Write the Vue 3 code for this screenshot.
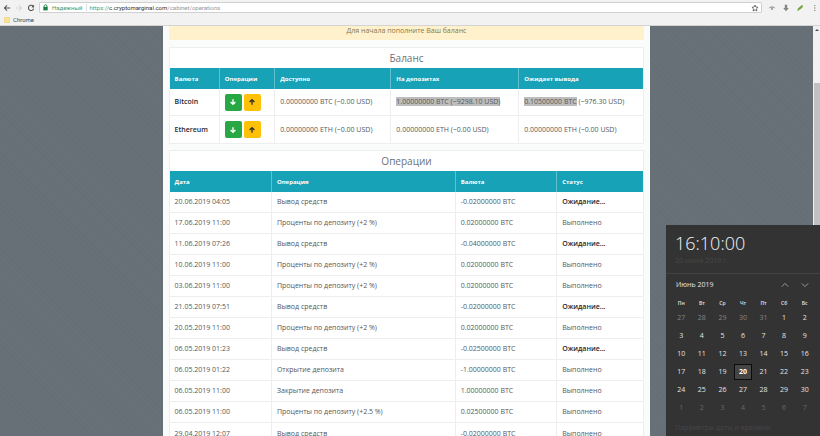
<script setup>
import { ref } from 'vue'

const address = ref('https://c.cryptomarginal.com/cabinet/operations')

const balances = [
  { name: 'Bitcoin', free: '0.00000000 BTC (~0.00 USD)', deposit: '1.00000000 BTC (~9298.10 USD)', pending: '0.10500000 BTC', pendingUsd: '(~976.30 USD)', selected: true },
  { name: 'Ethereum', free: '0.00000000 ETH (~0.00 USD)', deposit: '0.00000000 ETH (~0.00 USD)', pending: '0.00000000 ETH', pendingUsd: '(~0.00 USD)', selected: false },
]

const operations = [
  ['20.06.2019 04:05', 'Вывод средств', '-0.02000000 BTC', false],
  ['17.06.2019 11:00', 'Проценты по депозиту (+2 %)', '0.02000000 BTC', true],
  ['11.06.2019 07:26', 'Вывод средств', '-0.04000000 BTC', false],
  ['10.06.2019 11:00', 'Проценты по депозиту (+2 %)', '0.02000000 BTC', true],
  ['03.06.2019 11:00', 'Проценты по депозиту (+2 %)', '0.02000000 BTC', true],
  ['21.05.2019 07:51', 'Вывод средств', '-0.02000000 BTC', false],
  ['20.05.2019 11:00', 'Проценты по депозиту (+2 %)', '0.02000000 BTC', true],
  ['06.05.2019 01:23', 'Вывод средств', '-0.02500000 BTC', false],
  ['06.05.2019 01:22', 'Открытие депозита', '-1.00000000 BTC', true],
  ['06.05.2019 11:00', 'Закрытие депозита', '1.00000000 BTC', true],
  ['06.05.2019 11:00', 'Проценты по депозиту (+2.5 %)', '0.02500000 BTC', true],
  ['29.04.2019 12:07', 'Вывод средств', '-0.02000000 BTC', true],
]

const weekdays = ['Пн', 'Вт', 'Ср', 'Чт', 'Пт', 'Сб', 'Вс']
const weeks = Array.from({ length: 6 }, (_, w) =>
  Array.from({ length: 7 }, (_, d) => {
    const n = w * 7 + d - 4
    if (n < 1) return { day: n + 31, tone: 'before' }
    if (n > 30) return { day: n - 30, tone: 'after' }
    return { day: n, tone: n === 20 ? 'today' : 'current' }
  }),
)
</script>

<template>
  <div class="screen">
    <header class="browser">
      <div class="toolbar">
        <button class="tool" aria-label="Назад">
          <svg viewBox="0 0 10 10"><path d="M9 5H2M5 1.8 1.8 5 5 8.2" /></svg>
        </button>
        <button class="tool faded" aria-label="Вперёд">
          <svg viewBox="0 0 10 10"><path d="M1 5h7M5 1.8 8.2 5 5 8.2" /></svg>
        </button>
        <button class="tool" aria-label="Обновить">
          <svg viewBox="0 0 10 10"><path d="M7.8 3A3.3 3.3 0 1 0 8.3 5.8" /><path class="solid" d="M8.8 1v3.3H5.5z" /></svg>
        </button>
        <div class="address">
          <svg class="lock" viewBox="0 0 8 8"><path d="M2.4 4V2.5a1.6 1.6 0 0 1 3.2 0V4" /><rect x="1.5" y="3.3" width="5" height="4" /></svg>
          <span class="secure">Надежный</span>
          <span class="bar"></span>
          <label class="url">
            <input v-model="address" aria-label="Адрес" />
            <span class="url-text" aria-hidden="true"><i>https://</i>c.cryptomarginal.com<em>/cabinet/operations</em></span>
          </label>
          <button class="tool star" aria-label="В закладки">
            <svg viewBox="0 0 10 10"><path d="M5 1.3 6.1 3.8 8.8 4.1 6.8 6 7.4 8.7 5 7.3 2.6 8.7 3.2 6 1.2 4.1 3.9 3.8z" /></svg>
          </button>
        </div>
        <button class="tool ext" aria-label="Расширение">
          <svg viewBox="0 0 10 10"><path class="pale" d="M1 5.5C1.3 2 8.7 2 9 5.5L6.5 4.8 6 7.5H4L3.5 4.8z" /></svg>
        </button>
        <button class="tool ext" aria-label="Загрузки">
          <svg viewBox="0 0 10 10"><path class="gray" d="M3.5 1h3v4h2L5 9 1.5 5h2z" /></svg>
        </button>
        <button class="tool ext" aria-label="Заметки">
          <svg viewBox="0 0 10 10"><path class="green" d="M1.5 9 2.5 5.5 7 1.5 9 2 7.5 5 4 7.5z" /></svg>
        </button>
        <button class="tool ext" aria-label="Меню">
          <svg viewBox="0 0 10 10"><g class="gray"><circle cx="6" cy="2" r=".9" /><circle cx="6" cy="5" r=".9" /><circle cx="6" cy="8" r=".9" /></g></svg>
        </button>
      </div>
      <nav class="bookmarks"><a href="#"><span class="folder"></span>Chrome</a></nav>
    </header>

    <div class="viewport">
      <div class="backdrop">
        <main class="page">
          <p class="alert">Для начала пополните Ваш баланс</p>

          <section class="card">
            <h2>Баланс</h2>
            <table class="balance">
              <colgroup><col class="b1" /><col class="b2" /><col class="b3" /><col class="b4" /><col /></colgroup>
              <thead>
                <tr><th>Валюта</th><th>Операции</th><th>Доступно</th><th>На депозитах</th><th>Ожидает вывода</th></tr>
              </thead>
              <tbody>
                <tr v-for="b in balances" :key="b.name">
                  <td><strong>{{ b.name }}</strong></td>
                  <td>
                    <div class="actions">
                      <button class="act in" aria-label="Пополнить"><svg viewBox="0 0 10 10"><path d="M5 1.5v6.5M2 5l3 3 3-3" /></svg></button>
                      <button class="act out" aria-label="Вывести"><svg viewBox="0 0 10 10"><path d="M5 8.5V2M2 5l3-3 3 3" /></svg></button>
                    </div>
                  </td>
                  <td>{{ b.free }}</td>
                  <td><span :class="{ selected: b.selected }">{{ b.deposit }}</span></td>
                  <td><span :class="{ selected: b.selected }">{{ b.pending }}</span> {{ b.pendingUsd }}</td>
                </tr>
              </tbody>
            </table>
          </section>

          <section class="card">
            <h2>Операции</h2>
            <table class="history">
              <colgroup><col class="h1" /><col class="h2" /><col class="h3" /><col /></colgroup>
              <thead>
                <tr><th>Дата</th><th>Операция</th><th>Валюта</th><th>Статус</th></tr>
              </thead>
              <tbody>
                <tr v-for="(o, i) in operations" :key="i">
                  <td>{{ o[0] }}</td>
                  <td>{{ o[1] }}</td>
                  <td>{{ o[2] }}</td>
                  <td><template v-if="o[3]">Выполнено</template><strong v-else>Ожидание...</strong></td>
                </tr>
              </tbody>
            </table>
          </section>
        </main>
      </div>
      <div class="scrollbar"><span class="arrow"></span><span class="thumb"></span></div>
    </div>

    <aside class="clock">
      <div class="now">
        <time class="time">16:10:00</time>
        <span class="date">20 июня 2019 г.</span>
      </div>
      <div class="month">
        <span>Июнь 2019</span>
        <button aria-label="Предыдущий месяц"><svg viewBox="0 0 10 10"><path d="M1 7l4-4 4 4" /></svg></button>
        <button aria-label="Следующий месяц"><svg viewBox="0 0 10 10"><path d="M1 3l4 4 4-4" /></svg></button>
      </div>
      <table class="calendar">
        <thead><tr><th v-for="d in weekdays" :key="d">{{ d }}</th></tr></thead>
        <tbody>
          <tr v-for="(week, i) in weeks" :key="i">
            <td v-for="c in week" :key="c.day"><span :class="c.tone">{{ c.day }}</span></td>
          </tr>
        </tbody>
      </table>
      <a class="settings" href="#">Параметры даты и времени</a>
    </aside>
  </div>
</template>

<style>
body {
  margin: 0;
  overflow: hidden;
}
</style>

<style scoped>
.screen {
  position: relative;
  display: flex;
  flex-direction: column;
  height: 100vh;
  overflow: hidden;
  font: 7px/10px "Open Sans", "Noto Sans", sans-serif;
  color: #54585c;
}
* {
  box-sizing: border-box;
}
button {
  padding: 0;
  border: 0;
  background: none;
  font: inherit;
}
svg {
  display: block;
  fill: none;
  stroke: currentColor;
}

.browser {
  flex: none;
  background: #f2f2f2;
  border-bottom: 1px solid #d4d4d4;
  font-family: Roboto, "Noto Sans", sans-serif;
}
.toolbar {
  display: flex;
  align-items: center;
  height: 15px;
  padding: 0 2px 0 3px;
}
.tool {
  flex: none;
  width: 8px;
  margin-right: 4px;
  color: #505050;
}
.tool svg {
  width: 8px;
  height: 8px;
  stroke-width: 1.3;
}
.tool.faded {
  color: #d8d8d8;
}
.solid {
  fill: #505050;
  stroke: none;
}
.gray {
  fill: #858585;
  stroke: none;
}
.pale {
  fill: #a6a6a6;
  stroke: none;
}
.green {
  fill: #6fa537;
  stroke: none;
}
.tool.ext {
  margin: 0 0 0 6px;
}
.tool.star {
  margin: 0;
}
.tool.star svg {
  stroke-width: 1;
}
.address {
  flex: 1;
  display: flex;
  align-items: center;
  height: 11px;
  padding: 0 2px;
  border: 1px solid #d0d0d0;
  border-radius: 1px;
  background: #fff;
  font-size: 6px;
}
.lock {
  width: 7px;
  height: 7px;
  margin-right: 3px;
  color: #1b8043;
}
.lock rect {
  fill: currentColor;
  stroke: none;
}
.secure {
  color: #4c9a69;
}
.bar {
  width: 1px;
  height: 7px;
  margin: 0 3px;
  background: #ddd;
}
.url {
  flex: 1;
  display: grid;
}
.url > * {
  grid-area: 1 / 1;
}
.url input {
  width: 100%;
  height: 9px;
  padding: 0;
  border: 0;
  outline: 0;
  background: none;
  font: inherit;
  color: transparent;
}
.url-text {
  pointer-events: none;
  color: #303030;
}
.url-text i {
  font-style: normal;
  color: #5b9c74;
}
.url-text em {
  font-style: normal;
  color: #979797;
}
.bookmarks {
  height: 10px;
  padding-left: 4px;
  font-size: 6px;
}
.bookmarks a {
  display: inline-flex;
  align-items: center;
  gap: 3px;
  color: #444;
  text-decoration: none;
  line-height: 10px;
  vertical-align: top;
}
.folder {
  width: 6px;
  height: 6px;
  border: 1px solid #f0da8c;
  background: #fae296;
}

.viewport {
  flex: 1;
  display: flex;
  min-height: 0;
}
.backdrop {
  flex: 1;
  overflow: hidden;
  background: repeating-linear-gradient(45deg, #666e76 0 2px, #687078 2px 4px);
}
.page {
  width: 60%;
  min-height: 100%;
  margin: 0 auto;
  padding: 0 6px;
  background: #fafbfb;
}
.alert {
  margin: 0 0 7px;
  padding: 0 0 4px;
  background: #fff1cb;
  color: #8a7748;
  text-align: center;
}
.card {
  margin-bottom: 6px;
  border: 1px solid #eceeef;
  background: #fff;
}
.card h2 {
  margin: 0;
  font-size: 10px;
  line-height: 20px;
  font-weight: 400;
  text-align: center;
  color: #6c7277;
}
.card table {
  width: 100%;
  table-layout: fixed;
  border-collapse: separate;
  border-spacing: 0;
}
.card th,
.card td {
  padding: 0 0 0 5px;
  text-align: left;
  white-space: nowrap;
  border-right: 1px solid #eceeef;
  border-bottom: 1px solid #eceeef;
}
.card th:last-child,
.card td:last-child {
  border-right: 0;
}
.card tr:last-child td {
  border-bottom: 0;
}
.card th {
  height: 21px;
  background: #17a2b8;
  border-color: #62bfce;
  border-bottom: 0;
  color: #fff;
  font-size: 6px;
}
.card strong {
  color: #24282c;
  font-weight: 600;
}
.history td {
  height: 21px;
}
.balance td {
  height: 27px;
}
.b1 { width: 10.6%; }
.b2 { width: 11.7%; }
.b3 { width: 24.5%; }
.b4 { width: 27%; }
.h1 { width: 21.6%; }
.h2 { width: 38.8%; }
.h3 { width: 21.4%; }
.actions {
  display: flex;
  gap: 2px;
}
.act {
  display: grid;
  place-items: center;
  width: 17px;
  height: 17px;
  border-radius: 2px;
}
.act svg {
  width: 8px;
  height: 8px;
  stroke-width: 1.7;
}
.in {
  background: #28a745;
  color: #fff;
}
.out {
  background: #ffc107;
  color: #30302a;
}
.selected {
  background: #bdbdbd;
}

.scrollbar {
  width: 7px;
  display: flex;
  flex-direction: column;
  align-items: center;
  background: #f1f1f1;
}
.arrow {
  margin: 3px 0 52px;
  border: 2px solid transparent;
  border-top: 0;
  border-bottom: 2px solid #505050;
}
.thumb {
  width: 6px;
  height: 35%;
  background: #c1c1c1;
}

.clock {
  position: absolute;
  right: 0;
  bottom: 0;
  width: 154px;
  background: #333334;
  color: #e4e4e4;
}
.now {
  display: flex;
  flex-direction: column;
  padding: 6px 9px 7px;
  border-bottom: 1px solid #424242;
}
.time {
  font-size: 18px;
  line-height: 25px;
  font-weight: 300;
  color: #f4f4f4;
}
.date {
  color: #484848;
}
.month {
  display: flex;
  align-items: center;
  padding: 0 11px 0 10px;
  height: 22px;
}
.month span {
  flex: 1;
}
.month button {
  width: 8px;
  margin-left: 12px;
  color: #b5b5b5;
}
.month svg {
  width: 8px;
  height: 8px;
}
.calendar {
  width: 144px;
  margin-left: 5px;
  table-layout: fixed;
  border-spacing: 0;
  text-align: center;
}
.calendar th {
  height: 13px;
  padding: 0;
  font-size: 5px;
  font-weight: 600;
}
.calendar td {
  height: 18px;
  padding: 0;
}
.calendar td span {
  display: block;
  width: 18px;
  margin: 0 auto;
  line-height: 16px;
}
.calendar .before {
  color: #858585;
}
.calendar .after {
  color: #686868;
}
.calendar .today {
  line-height: 14px;
  border: 1px solid #0c0c0c;
  background: #454545;
  font-weight: 700;
  color: #fff;
}
.settings {
  display: block;
  padding: 6px 9px 3px;
  color: #464646;
  text-decoration: none;
}
</style>
